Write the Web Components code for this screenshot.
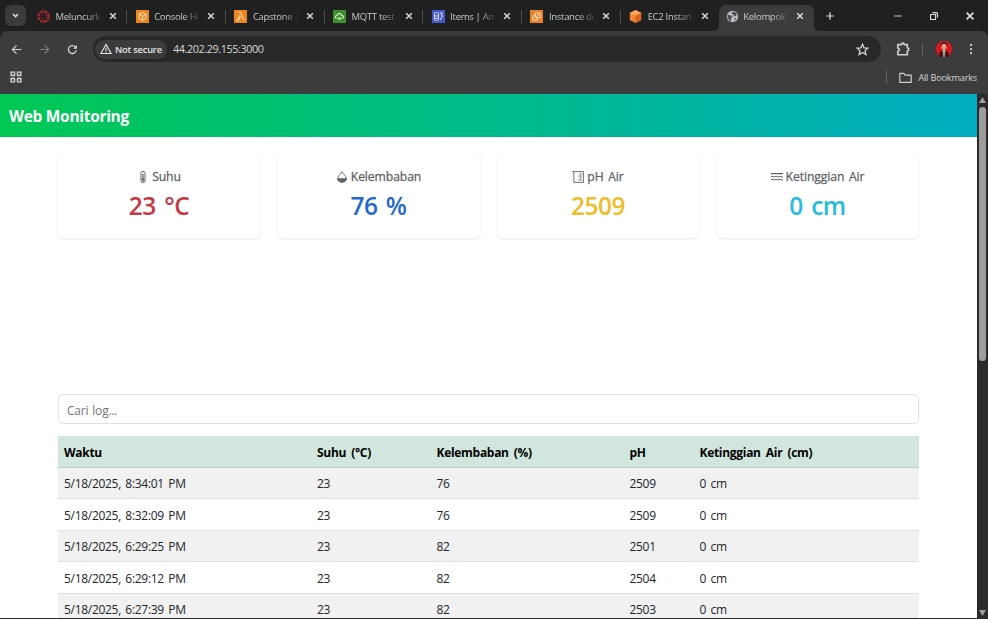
<!DOCTYPE html>
<html lang="id">
<head>
<meta charset="utf-8">
<title>Web Monitoring</title>
<style>
  html, body { margin: 0; height: 100%; overflow: hidden; }
  body { font-family: "Open Sans", "Noto Sans", sans-serif; background: #3c3c3c; }
</style>
</head>
<body>
<browser-window></browser-window>

<script>
const ICONS = {
  canvas: `<g fill="none" stroke="#b5242c"><circle cx="8" cy="8" r="6.3" stroke-width="2.6" stroke-dasharray="3.9 1.05"/><circle cx="8" cy="8" r="3" stroke-width="1.3" stroke-dasharray="1 1.36"/></g>`,
  console: `<path fill="#ee861f" d="M0 0h16v16H0z"/><path d="M8 3l4.3 2.3v5.2L8 13l-4.3-2.5V5.3zM3.7 5.3L8 7.7l4.3-2.4M8 7.7V13" fill="none" stroke="#ffe6c4" stroke-width="1.2"/>`,
  lambda: `<path fill="#ee861f" d="M0 0h16v16H0z"/><path d="M5.5 3h2.700l3.300 8.800 1.500-.5M7.300 6.300L3.500 13h2l2.600-5" fill="none" stroke="#ffe6c4" stroke-width="1.2"/>`,
  iot: `<path fill="#3f8f2f" d="M0 0h16v16H0z"/><path d="M4.500 10.500C2 10 2.500 6.500 5 6.700 6 3.500 10 4 10.500 6.500c3-.2 3.200 3.500.8 4M6 9l2 2.500L10.500 9" fill="none" stroke="#e3f6d8" stroke-width="1.3"/>`,
  dynamo: `<path fill="#4656c9" d="M0 0h16v16H0z"/><path d="M3 4v8c1 1.200 4 1.200 5 0V4c-1-1.200-4-1.200-5 0zm0 2.600c1 1 4 1 5 0M3 9.500c1 1 4 1 5 0M9.500 3.500h3.200L11.500 7H13l-3 5.500" fill="none" stroke="#dfe3ff" stroke-width="1.2"/>`,
  instance: `<path fill="#e8812a" d="M0 0h16v16H0z"/><path d="M6.500 3.500h6v6h-6zM9 9.500v3H3.500V7h3M7.500 8.500L11 5" fill="none" stroke="#ffe2c0" stroke-width="1.2"/>`,
  ec2: `<path fill="#f58536" d="M8 0l7 3.600v8.800L8 16l-7-3.600V3.600z"/><path fill="#fca55c" d="M8 0l7 3.600L8 7 1 3.600z"/><path fill="#d8641c" d="M8 7l7-3.400v8.800L8 16z"/>`,
  globe: `<circle cx="8" cy="8" r="7" fill="#b9bcc2"/><path d="M2 5.500L7 7l1 2-2 1 .5 4C3.500 13 1.800 10 2 5.500zM8 2.200l4 .8 1.500 3.500L10 8 9 5.500 7 4.500zM10.500 10l2.500-.5-2 3.500z" fill="#4b4d50"/>`,
  close: `<path d="M3.500 3.500l9 9m0-9l-9 9" stroke="currentColor" stroke-width="2.2"/>`,
  chevron: `<path d="M3.500 5.500L8 10l4.500-4.500" fill="none" stroke="currentColor" stroke-width="2.6"/>`,
  plus: `<path d="M8 2v12M2 8h12" stroke="currentColor" stroke-width="1.9"/>`,
  minimize: `<path d="M2 8h12" stroke="currentColor" stroke-width="1.4"/>`,
  restore: `<path d="M2.500 5.500h8v8h-8zM5.500 2.500h6.500q1.500 0 1.500 1.500v6.500" fill="none" stroke="currentColor" stroke-width="1.8" stroke-linejoin="round"/>`,
  back: `<path d="M15 8H2m6-6L2 8l6 6" fill="none" stroke="currentColor" stroke-width="1.8"/>`,
  forward: `<path d="M1 8h13M8 2l6 6-6 6" fill="none" stroke="currentColor" stroke-width="1.8"/>`,
  reload: `<path d="M13.500 9.300A5.800 5.800 0 1 1 12.200 4.200L14 6" fill="none" stroke="currentColor" stroke-width="1.9"/><path d="M14.500 1.500v5.500H9z" fill="currentColor"/>`,
  warning: `<path d="M8 2L1.200 14h13.600zM8 6.200v4M8 11.300v1.500" fill="none" stroke="currentColor" stroke-width="1.5"/>`,
  star: `<path d="M8 1.500l1.900 4.400 4.800.4-3.600 3.200 1.100 4.700L8 11.700l-4.200 2.500 1.100-4.700L1.300 6.300l4.800-.4z" fill="none" stroke="currentColor" stroke-width="1.6"/>`,
  puzzle: `<path d="M2 3h4.200c0-2.300 3.100-2.300 3.100 0H13v3.800c2.200 0 2.200 3.200 0 3.200v4.500H2v-4c2.300 0 2.300-3.500 0-3.500z" fill="none" stroke="currentColor" stroke-width="1.8" stroke-linejoin="round"/>`,
  more: `<g fill="currentColor"><circle cx="8" cy="2.500" r="1.500"/><circle cx="8" cy="8" r="1.500"/><circle cx="8" cy="13.500" r="1.500"/></g>`,
  grid: `<path d="M1.500 1.500h4.500V6H1.500zM10 1.500h4.500V6H10zM1.500 10h4.500v4.500H1.500zM10 10h4.500v4.500H10z" fill="none" stroke="currentColor" stroke-width="1.9"/>`,
  folder: `<path d="M1 3h5l1.500 2H15v9H1z" fill="none" stroke="currentColor" stroke-width="1.4" stroke-linejoin="round"/>`,
  avatar: `<circle cx="8" cy="8" r="8" fill="#e3141f"/><path d="M4.600 2.500Q8-.5 11.400 2.500V6H4.600z" fill="#5a2018"/><rect x="5.400" y="3" width="5.200" height="5.800" rx="2.400" fill="#e6a283"/><path d="M3 15q0-5.500 4-6.300h2q4 .8 4 6.300-5 2-10 0z" fill="#4b1416"/><path d="M6.600 9h2.800L8.800 16H7.200z" fill="#f5e9e6"/><path d="M7.600 10h.8v6h-.8z" fill="#222"/>`,
  thermometer: `<path d="M5.200 3.300a2.800 2.800 0 0 1 5.600 0v9.400a2.800 2.800 0 0 1-5.600 0z" fill="#eee" stroke="currentColor" stroke-width="1.2"/><path d="M8 4v9.500" stroke="currentColor" stroke-width="1.500"/><path d="M6.200 9h3.600v4q-1.800 2-3.600 0z" fill="currentColor" opacity=".7"/>`,
  droplet: `<path d="M8 1C6.300 4.300 2 7 2 10.500c0 6 12 6 12 0C14 7 9.700 4.300 8 1z" fill="none" stroke="currentColor" stroke-width="1.200"/><path d="M2 9.500h12c0 7.300-12 7.300-12 0z" fill="currentColor"/>`,
  ruler: `<path d="M.8.800h14.400v14.400H2.500V2.500L.8.800" fill="none" stroke="currentColor" stroke-width="1.200"/><path d="M10 4h3M8.500 6.700H13M10 9.300h3M8.500 12H13" stroke="currentColor" stroke-width="1.200"/>`,
  waves: `<path d="M0 3.500h16M0 7.500q1.300-1 2.700 0t2.700 0 2.700 0 2.700 0 2.700 0 2.500 0M0 11.500q1.300-1 2.700 0t2.700 0 2.700 0 2.700 0 2.700 0 2.500 0" fill="none" stroke="currentColor" stroke-width="1.400"/>`
};

class UiIcon extends HTMLElement {
  constructor() {
    super();
    this.attachShadow({ mode: "open" });
  }

  connectedCallback() {
    this.shadowRoot.innerHTML = /* html */`
    <style>
      :host {
        display: block;
        flex: none;
        width: var(--size, 12px);
        height: var(--size, 12px);
      }
      svg { display: block; width: 100%; height: 100%; }
    </style>
    <svg viewBox="0 0 16 16">${ICONS[this.getAttribute("name")]}</svg>`;
  }
}

class BrowserTab extends HTMLElement {
  constructor() {
    super();
    this.attachShadow({ mode: "open" });
  }

  static get styles() {
    return /* css */`
      :host {
        display: flex;
        align-items: center;
        box-sizing: border-box;
        width: 98.7px;
        height: 26px;
        padding: 0 0 4px 8.5px;
        color: #c6c8c8;
        font-size: 9.500px;
      }

      :host([active]) {
        width: 95px;
        padding-left: 7px;
        background: #3c3c3c;
        border-radius: 7px 7px 0 0;
        position: relative;
      }

      /* flared feet of the active tab */

      :host([active])::before,
      :host([active])::after {
        content: "";
        position: absolute;
        bottom: 0;
        width: 6px;
        height: 6px;
      }

      :host([active])::before {
        left: -6px;
        background: radial-gradient(circle at 0 0, #0000 6px, #3c3c3c 6.5px);
      }

      :host([active])::after {
        right: -6px;
        background: radial-gradient(circle at 100% 0, #0000 6px, #3c3c3c 6.5px);
      }

      .title {
        width: 44px;
        margin-left: 5.500px;
        overflow: hidden;
        white-space: nowrap;
        letter-spacing: -.3px;
        -webkit-mask-image: linear-gradient(90deg, #000 65%, #0003);
        mask-image: linear-gradient(90deg, #000 65%, #0003);
      }

      .favicon { --size: 13px; }
      .close { --size: 10px; margin-left: 8px; color: #dedede; }
      :host([active]) .title { margin-left: 4px; }
      .sep { width: 1px; height: 13px; margin-left: auto; background: #4a4c4c; }
      :host([active]) .sep, :host([last]) .sep { display: none; }
    `;
  }

  connectedCallback() {
    this.shadowRoot.innerHTML = /* html */`
    <style>${BrowserTab.styles}</style>
    <ui-icon class="favicon" name="${this.getAttribute("icon")}"></ui-icon>
    <div class="title"><slot></slot></div>
    <ui-icon class="close" name="close"></ui-icon>
    <div class="sep"></div>`;
  }
}

class BrowserToolbar extends HTMLElement {
  constructor() {
    super();
    this.attachShadow({ mode: "open" });
  }

  static get styles() {
    return /* css */`
      :host {
        display: block;
        height: 63px;
        background: #3c3c3c;
        border-radius: 7px 7px 0 0;
        color: #d2d2d2;
      }

      .row { display: flex; align-items: center; }
      .main { height: 36px; padding: 0 11px; }
      .nav { --size: 11px; }
      .nav + .nav { margin-left: 17px; }
      .dim { color: #7d7d7d; }

      .omnibox {
        display: flex;
        align-items: center;
        box-sizing: border-box;
        width: 789px;
        height: 26px;
        margin-left: 15px;
        padding: 0 12px 0 2px;
        background: #282828;
        border-radius: 13px;
      }

      .chip {
        display: flex;
        align-items: center;
        box-sizing: border-box;
        width: 72px;
        height: 19px;
        padding-left: 5px;
        gap: 3px;
        background: #3c3c3c;
        border-radius: 10px;
        color: #e4e4e4;
        font-size: 9.300px;
        font-weight: 600;
        letter-spacing: -.2px;
        white-space: nowrap;
      }

      .url { margin: -2px 0 0 6px; font-size: 10.800px; letter-spacing: -.4px; color: #d8d8d8; }
      .star { --size: 13px; margin-left: auto; }
      .puzzle { --size: 14px; margin-left: 15px; }
      .rule { width: 1px; height: 12px; background: #666; }
      .avatar { --size: 16px; margin-left: 13px; }
      .more { --size: 12px; margin-left: 13px; }
      .marks { height: 20px; padding: 0 11px 0 9.5px; font-size: 9.200px; letter-spacing: -.2px; }
      .marks .rule { margin-left: auto; }
      .marks .folder { --size: 13px; margin: 0 6px 0 12px; }
    `;
  }

  connectedCallback() {
    this.shadowRoot.innerHTML = /* html */`
    <style>${BrowserToolbar.styles}</style>
    <div class="row main">
      <ui-icon class="nav" name="back"></ui-icon>
      <ui-icon class="nav dim" name="forward"></ui-icon>
      <ui-icon class="nav" name="reload"></ui-icon>
      <div class="omnibox">
        <div class="chip"><ui-icon name="warning"></ui-icon>Not secure</div>
        <div class="url"><slot></slot></div>
        <ui-icon class="star" name="star"></ui-icon>
      </div>
      <ui-icon class="puzzle" name="puzzle"></ui-icon>
      <div class="rule" style="margin-left: 12px"></div>
      <ui-icon class="avatar" name="avatar"></ui-icon>
      <ui-icon class="more" name="more"></ui-icon>
    </div>
    <div class="row marks">
      <ui-icon name="grid"></ui-icon>
      <div class="rule"></div>
      <ui-icon class="folder" name="folder"></ui-icon>
      <span>All Bookmarks</span>
    </div>`;
  }
}

class SensorCard extends HTMLElement {
  constructor() {
    super();
    this.attachShadow({ mode: "open" });
  }

  static get styles() {
    return /* css */`
      :host {
        display: flex;
        flex-direction: column;
        align-items: center;
        box-sizing: border-box;
        height: 85px;
        padding-top: 14px;
        background: #fff;
        border-radius: 5px;
        box-shadow: 0 1px 3px #00000018;
      }

      .label {
        display: flex;
        align-items: center;
        height: 19px;
        gap: 3px;
        color: #5c6166;
        font-size: 12.200px;
        font-weight: 500;
        letter-spacing: -.1px;
        word-spacing: 1.500px;
        -webkit-text-stroke: .25px;
      }

      .value {
        height: 40px;
        line-height: 39px;
        font-size: 24.500px;
        font-weight: 600;
        letter-spacing: -.5px;
        word-spacing: 2.500px;
        color: var(--tone);
      }
    `;
  }

  connectedCallback() {
    this.shadowRoot.innerHTML = /* html */`
    <style>${SensorCard.styles}</style>
    <div class="label"><ui-icon name="${this.getAttribute("icon")}"></ui-icon>${this.getAttribute("label")}</div>
    <div class="value"><slot></slot></div>`;
  }
}

class LogTable extends HTMLElement {
  constructor() {
    super();
    this.attachShadow({ mode: "open" });
    this.rows = [
      ["5/18/2025, 8:34:01 PM", 23, 76, 2509, "0 cm"],
      ["5/18/2025, 8:32:09 PM", 23, 76, 2509, "0 cm"],
      ["5/18/2025, 6:29:25 PM", 23, 82, 2501, "0 cm"],
      ["5/18/2025, 6:29:12 PM", 23, 82, 2504, "0 cm"],
      ["5/18/2025, 6:27:39 PM", 23, 82, 2503, "0 cm"]
    ];
  }

  static get styles() {
    return /* css */`
      :host { display: block; color: #212529; font-size: 12px; }

      .row {
        display: grid;
        grid-template-columns: 253px 119.5px 193px 70px 1fr;
        align-items: center;
        box-sizing: border-box;
        height: 31.5px;
        padding: 2px 0 0 6px;
        border-bottom: 1px solid #dee2e6;
        letter-spacing: -.3px;
        word-spacing: 1.600px;
      }

      .row:nth-child(even) { background: #f1f1f1; }

      .row.head {
        background: #d1e7dd;
        border-color: #bcd0c7;
        color: #000;
        font-weight: 700;
        word-spacing: 2.300px;
      }
    `;
  }

  renderRow(cells, type = "") {
    return `<div class="row ${type}">${cells.map(cell => `<span>${cell}</span>`).join("")}</div>`;
  }

  connectedCallback() {
    const head = ["Waktu", "Suhu (°C)", "Kelembaban (%)", "pH", "Ketinggian Air (cm)"];
    this.shadowRoot.innerHTML = /* html */`
    <style>${LogTable.styles}</style>
    <div>${this.renderRow(head, "head")}${this.rows.map(row => this.renderRow(row)).join("")}</div>`;
  }
}

class MonitoringPage extends HTMLElement {
  constructor() {
    super();
    this.attachShadow({ mode: "open" });
  }

  static get styles() {
    return /* css */`
      :host { display: block; overflow: hidden; background: #fff; }

      header {
        height: 43px;
        padding-left: 9px;
        background: linear-gradient(90deg, #00c853, #00acc1);
        color: #fff;
        font-size: 15.500px;
        font-weight: 700;
        line-height: 45px;
        letter-spacing: -.3px;
      }

      main { padding: 16px 58px 0; }
      .cards { display: grid; grid-template-columns: repeat(4, 1fr); gap: 17.5px; }

      input {
        display: block;
        box-sizing: border-box;
        width: 100%;
        height: 30px;
        margin: 156px 0 12px;
        padding: 2px 8px 0;
        border: 1px solid #dee2e6;
        border-radius: 5px;
        font: 12px "Open Sans", sans-serif;
        letter-spacing: -.2px;
        word-spacing: 1px;
      }

      input::placeholder { color: #6f757a; }
    `;
  }

  connectedCallback() {
    this.shadowRoot.innerHTML = /* html */`
    <style>${MonitoringPage.styles}</style>
    <header>Web Monitoring</header>
    <main>
      <div class="cards">
        <sensor-card icon="thermometer" label="Suhu" style="--tone: #c53a47">23 °C</sensor-card>
        <sensor-card icon="droplet" label="Kelembaban" style="--tone: #2369cc">76 %</sensor-card>
        <sensor-card icon="ruler" label="pH Air" style="--tone: #edbd2c">2509</sensor-card>
        <sensor-card icon="waves" label="Ketinggian Air" style="--tone: #26bddc">0 cm</sensor-card>
      </div>
      <input placeholder="Cari log...">
      <log-table></log-table>
    </main>`;
  }
}

class PageScrollbar extends HTMLElement {
  constructor() {
    super();
    this.attachShadow({ mode: "open" });
  }

  connectedCallback() {
    this.shadowRoot.innerHTML = /* html */`
    <style>
      :host {
        display: flex;
        flex-direction: column;
        align-items: center;
        justify-content: space-between;
        box-sizing: border-box;
        padding: 3px 0 2px 1px;
        background: #2b2b2b;
      }
      svg { display: block; width: 7px; height: 6px; fill: #a0a0a0; }
      .thumb { width: 7px; height: 254px; margin: 4px 0 auto; border-radius: 4px; background: #9d9d9d; }
    </style>
    <svg viewBox="0 0 7 6"><path d="M3.500 0L7 6H0z"/></svg>
    <div class="thumb"></div>
    <svg viewBox="0 0 7 6"><path d="M0 0h7L3.500 6z"/></svg>`;
  }
}

class BrowserWindow extends HTMLElement {
  constructor() {
    super();
    this.attachShadow({ mode: "open" });
  }

  static get styles() {
    return /* css */`
      :host {
        display: flex;
        flex-direction: column;
        box-sizing: border-box;
        width: 988px;
        height: 619px;
        border-bottom: 1px solid #2b2b2b;
        background: #1f2121;
      }

      .strip {
        display: flex;
        align-items: center;
        height: 31px;
        padding-left: 5px;
        color: #e0e0e0;
      }

      .search {
        --size: 9px;
        display: grid;
        place-items: center;
        width: 21px;
        height: 21px;
        margin-right: 2.5px;
        border-radius: 6px;
        background: #3a3b3b;
      }

      .tabs { display: flex; align-self: flex-end; }
      .add { --size: 10px; margin-left: 11px; }
      .controls { display: flex; gap: 26px; margin: 0 13px 0 auto; --size: 10px; }
      .view { display: grid; grid-template-columns: 1fr 11.5px; flex: 1; min-height: 0; }
    `;
  }

  connectedCallback() {
    this.shadowRoot.innerHTML = /* html */`
    <style>${BrowserWindow.styles}</style>
    <div class="strip">
      <div class="search"><ui-icon name="chevron"></ui-icon></div>
      <div class="tabs">
        <browser-tab icon="canvas">Meluncurk</browser-tab>
        <browser-tab icon="console">Console Ho</browser-tab>
        <browser-tab icon="lambda">Capstone |</browser-tab>
        <browser-tab icon="iot">MQTT test</browser-tab>
        <browser-tab icon="dynamo">Items | Am</browser-tab>
        <browser-tab icon="instance">Instance de</browser-tab>
        <browser-tab icon="ec2" last>EC2 Instan</browser-tab>
        <browser-tab icon="globe" active>Kelompok</browser-tab>
      </div>
      <ui-icon class="add" name="plus"></ui-icon>
      <div class="controls">
        <ui-icon name="minimize"></ui-icon>
        <ui-icon name="restore"></ui-icon>
        <ui-icon name="close" style="--size: 12px; margin: -1px"></ui-icon>
      </div>
    </div>
    <browser-toolbar>44.202.29.155:3000</browser-toolbar>
    <div class="view">
      <monitoring-page></monitoring-page>
      <page-scrollbar></page-scrollbar>
    </div>`;
  }
}

customElements.define("ui-icon", UiIcon);
customElements.define("browser-tab", BrowserTab);
customElements.define("browser-toolbar", BrowserToolbar);
customElements.define("sensor-card", SensorCard);
customElements.define("log-table", LogTable);
customElements.define("monitoring-page", MonitoringPage);
customElements.define("page-scrollbar", PageScrollbar);
customElements.define("browser-window", BrowserWindow);
</script>
</body>
</html>
